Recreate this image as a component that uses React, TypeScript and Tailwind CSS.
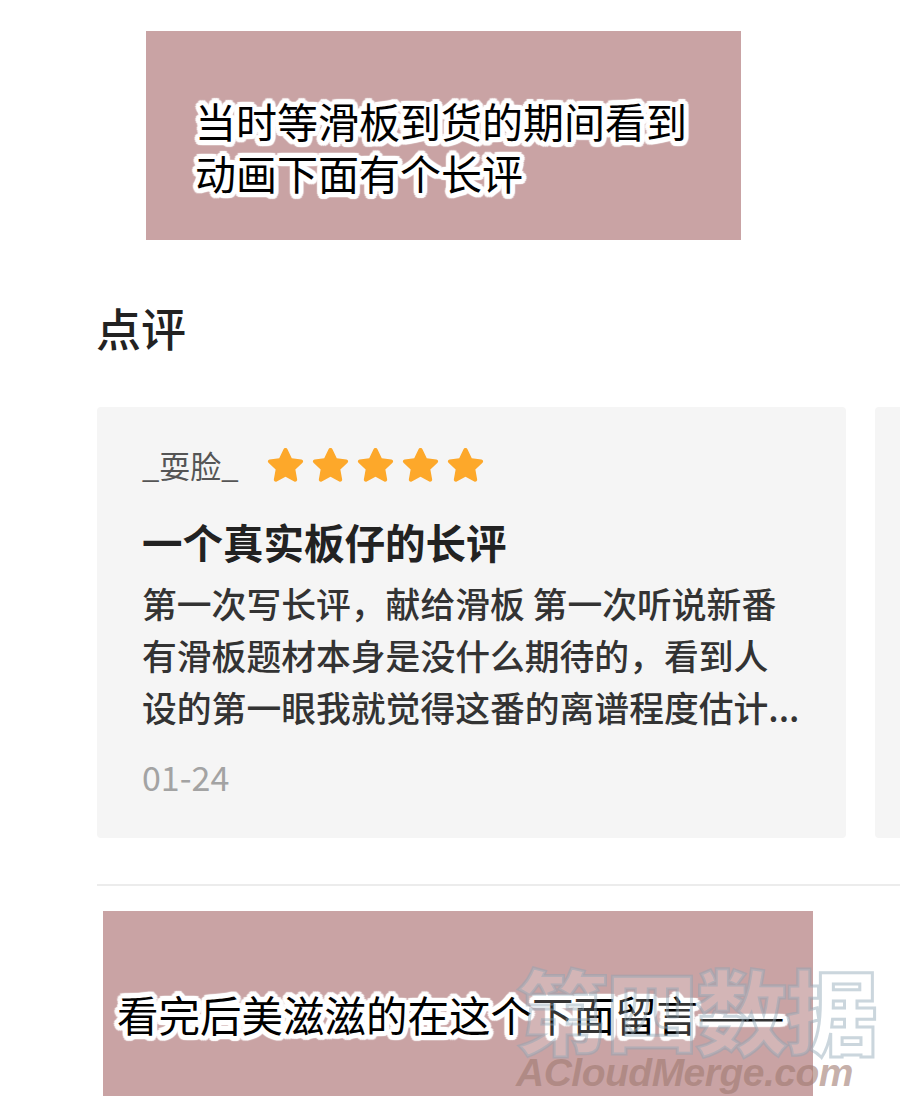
import React from "react";

const outline =
  "[text-shadow:5px_0_1px_#fff,4.6px_1.9px_1px_#fff,3.5px_3.5px_1px_#fff,1.9px_4.6px_1px_#fff,0_5px_1px_#fff,-1.9px_4.6px_1px_#fff,-3.5px_3.5px_1px_#fff,-4.6px_1.9px_1px_#fff,-5px_0_1px_#fff,-4.6px_-1.9px_1px_#fff,-3.5px_-3.5px_1px_#fff,-1.9px_-4.6px_1px_#fff,0_-5px_1px_#fff,1.9px_-4.6px_1px_#fff,3.5px_-3.5px_1px_#fff,4.6px_-1.9px_1px_#fff]";

function Star() {
  return (
    <svg viewBox="0 0 24 24" className="h-[43px] w-[43px]">
      <path
        d="M12 2.2c.5 0 .9.3 1.1.7l2.4 5 5.4.7c.9.1 1.3 1.2.6 1.9l-4 3.8 1 5.4c.2.9-.8 1.6-1.6 1.2L12 18.3l-4.9 2.6c-.8.4-1.8-.3-1.6-1.2l1-5.4-4-3.8c-.7-.7-.3-1.8.6-1.9l5.4-.7 2.4-5c.2-.4.6-.7 1.1-.7z"
        fill="#fda82a"
      />
    </svg>
  );
}

export default function App() {
  const cjk = "font-['Noto_Sans_CJK_SC','Noto_Sans',sans-serif]";
  const body = [
    "第一次写长评，献给滑板 第一次听说新番",
    "有滑板题材本身是没什么期待的，看到人",
    "设的第一眼我就觉得这番的离谱程度估计...",
  ];

  return (
    <div className={`relative h-[1107px] w-[900px] overflow-hidden bg-white ${cjk}`}>
      <div className="pl-[146px] pt-[31px]">
        <div className="h-[209px] w-[595px] bg-[#c9a3a4] pl-[49px] pt-[63px]">
          <p className={`text-[41px] leading-[52px] text-black ${outline}`}>
            当时等滑板到货的期间看到
            <br />
            动画下面有个长评
          </p>
        </div>
      </div>

      <h2 className="mt-[63px] pl-[96px] text-[45px] leading-[50px] font-medium text-[#222]">
        点评
      </h2>

      <div className="mt-[54px] flex gap-[29px] pl-[97px]">
        <section className="h-[431px] w-[749px] shrink-0 rounded-[4px] bg-[#f5f5f5] pl-[45px] pt-[38px]">
          <div className="flex h-[40px] items-center">
            <span className="text-[31px] leading-[40px] text-[#555]">_耍脸_</span>
            <div className="ml-[25px] flex gap-[2px]">
              <Star />
              <Star />
              <Star />
              <Star />
              <Star />
            </div>
          </div>
          <h3 className="mt-[33px] text-[40.5px] leading-[48px] font-bold text-[#222]">
            一个真实板仔的长评
          </h3>
          <div className="mt-[11px] text-[34.8px] leading-[52px] font-medium text-[#333]">
            {body.map((line) => (
              <p key={line} className="whitespace-nowrap">
                {line}
              </p>
            ))}
          </div>
          <p className="mt-[24px] text-[34px] leading-[40px] text-[#a3a3a3]">01-24</p>
        </section>
        <section className="h-[431px] w-[749px] shrink-0 rounded-[4px] bg-[#f5f5f5]" />
      </div>

      <div className="ml-[97px] mt-[46px] h-[2px] bg-[#ececec]" />

      <div className="pl-[103px] pt-[25px]">
        <div className="h-[185px] w-[710px] bg-[#c9a3a4] pl-[14px] pt-[77px]">
          <p className={`whitespace-nowrap text-[41.5px] leading-[52px] text-black ${outline}`}>
            看完后美滋滋的在这个下面留言
            <span className="inline-block origin-left scale-x-[1.25]">——</span>
          </p>
        </div>
      </div>

      {/* watermark */}
      <div className="pointer-events-none absolute left-[516px] top-[958px] select-none">
        <p className="text-[92px] leading-[100px] font-black tracking-[-2px] text-white/20 [-webkit-text-stroke:3px_rgba(140,165,180,0.45)]">
          第四数据
        </p>
        <p className="-mt-[6px] font-['Liberation_Sans',sans-serif] text-[39px] leading-[42px] font-bold italic tracking-[-0.5px] text-[#a07a70]/60">
          ACloudMerge.com
        </p>
      </div>
    </div>
  );
}
